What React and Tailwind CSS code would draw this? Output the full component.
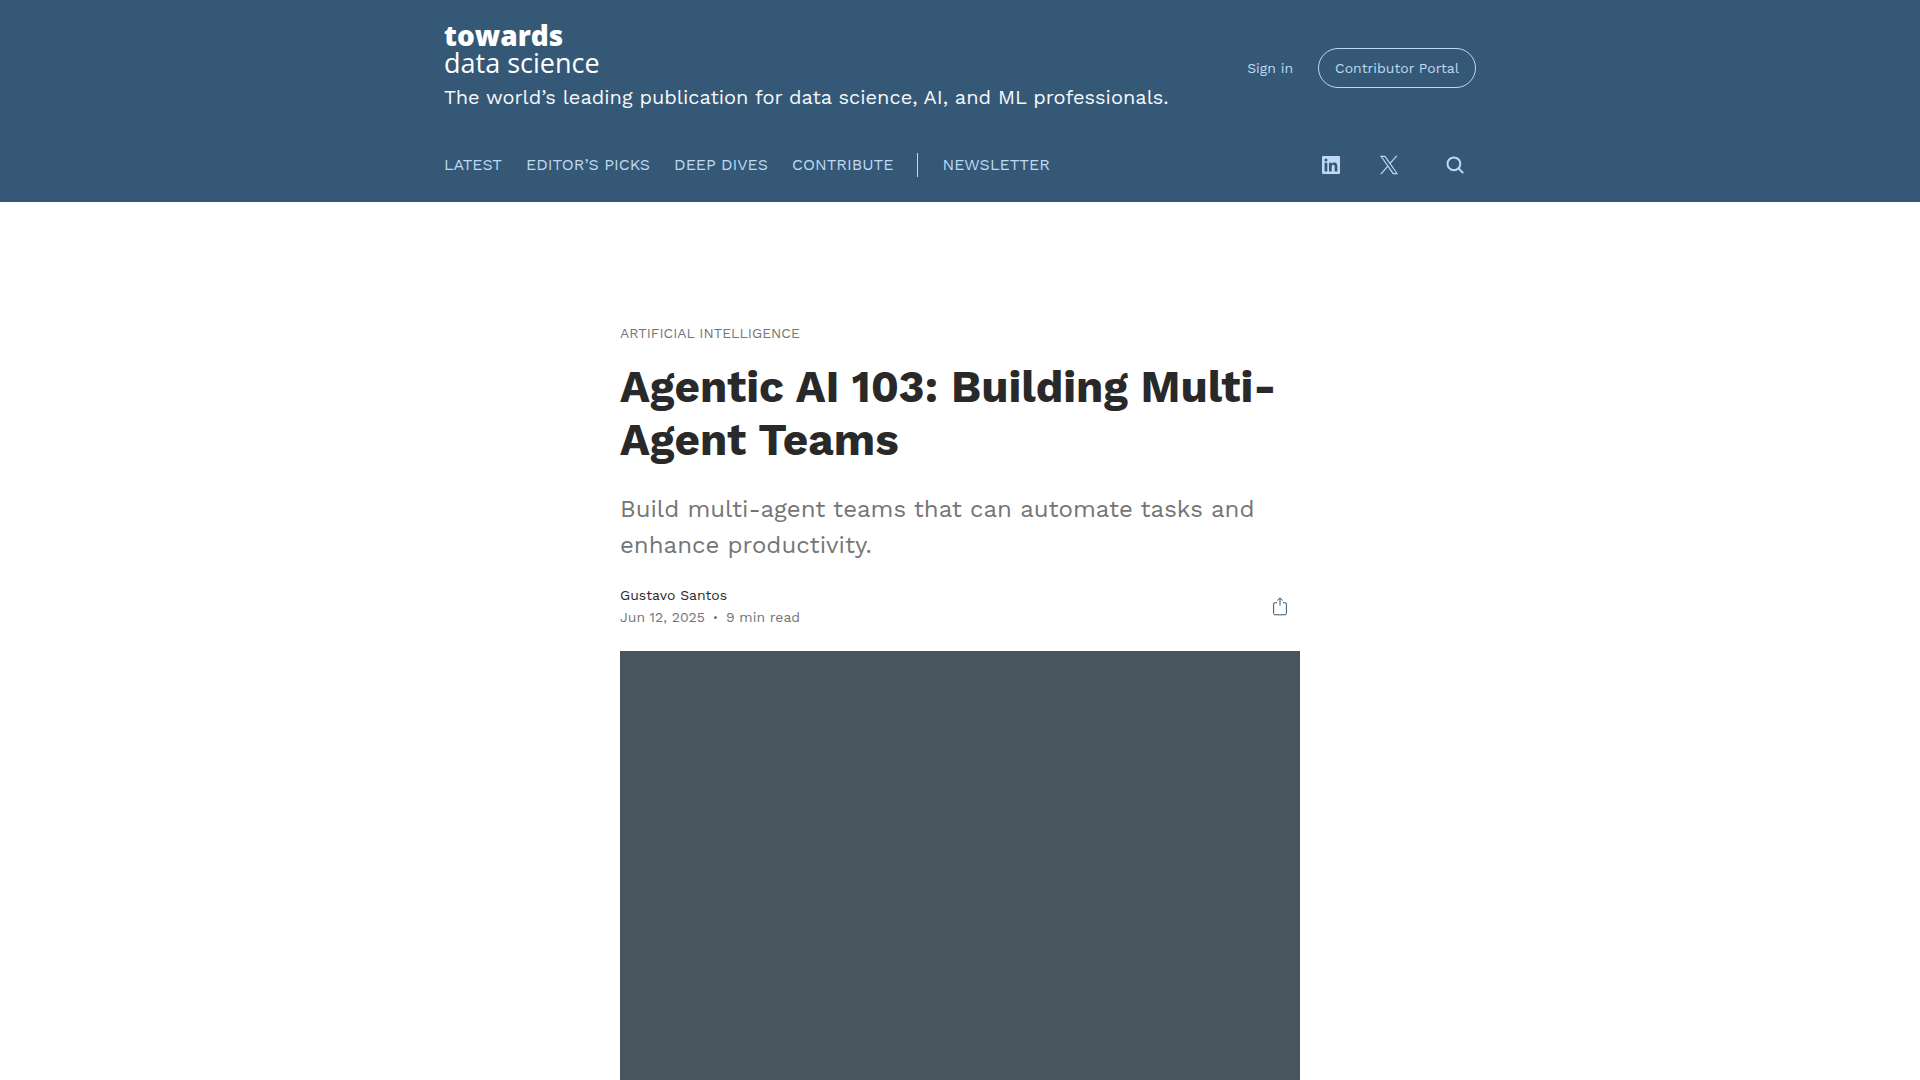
const NAV_LINKS = ["Latest", "Editor’s Picks", "Deep Dives", "Contribute"];

function LinkedInIcon() {
  return (
    <svg viewBox="0 0 18 18" className="size-[18px]" fill="currentColor" aria-hidden="true">
      <path
        fillRule="evenodd"
        d="M1 0h16a1 1 0 0 1 1 1v16a1 1 0 0 1-1 1H1a1 1 0 0 1-1-1V1a1 1 0 0 1 1-1Zm1.6 6.8v8.6h2.7V6.8H2.6Zm1.35-4.2a1.5 1.5 0 1 0 0 3 1.5 1.5 0 0 0 0-3ZM7 6.8v8.6h2.7v-4.3c0-1.2.3-2.3 1.6-2.3 1.35 0 1.35 1.3 1.35 2.3v4.3h2.7v-4.8c0-2.3-.5-4-3.2-4-1.3 0-2.1.7-2.5 1.4V6.8H7Z"
      />
    </svg>
  );
}

function XIcon() {
  return (
    <svg viewBox="0 0 24 24" className="size-[20px]" fill="currentColor" aria-hidden="true">
      <path d="M14.1 10.3 22.3 1h-1.9l-7.2 8.1L7.5 1H1.2l8.6 12.2L1.2 23h1.9l7.5-8.5 6 8.5h6.3l-8.8-12.7ZM3.8 2.4h3l13.7 19.2h-3L3.8 2.4Z" />
    </svg>
  );
}

function SearchIcon() {
  return (
    <svg viewBox="0 0 18 18" className="size-[18px]" fill="none" stroke="currentColor" strokeWidth="2" aria-hidden="true">
      <circle cx="7.9" cy="7.8" r="6.4" />
      <path d="m12.4 12.3 4.8 4.8" />
    </svg>
  );
}

function ShareIcon() {
  return (
    <svg viewBox="0 0 14 19" className="h-[19px] w-[14px]" fill="none" stroke="currentColor" aria-hidden="true">
      <path d="M4 5.7H2A1.4 1.4 0 0 0 .6 7.1v9.3A1.4 1.4 0 0 0 2 17.8h10a1.4 1.4 0 0 0 1.4-1.4V7.1A1.4 1.4 0 0 0 12 5.7h-2" />
      <path d="M7 8.6V1M4.2 3.6 7 .9l2.8 2.7" />
    </svg>
  );
}

function Header() {
  return (
    <header className="bg-[#355876] text-[#bdd9f4]">
      <div className="mx-auto max-w-[1032px] pt-[22px] pb-[15px]">
        <div className="flex items-center justify-between">
          <div>
            <a href="#home" className="block font-['Open_Sans',sans-serif] leading-[27px] text-white">
              <span className="block text-[28px] font-extrabold">towards</span>
              <span className="block text-[27px]">data science</span>
            </a>
            <p className="mt-2 text-[20px] leading-[26px] text-[#f5f8fb]">
              The world’s leading publication for data science, AI, and ML professionals.
            </p>
          </div>
          <div className="flex items-center gap-[25px] pt-1 text-sm">
            <a href="#signin">Sign in</a>
            <a href="#portal" className="rounded-full border border-[#bdd9f4] px-4 py-[9px]">
              Contributor Portal
            </a>
          </div>
        </div>
        <div className="mt-[33px] flex h-11 items-center justify-between">
          <nav className="flex items-center gap-6 text-base uppercase">
            {NAV_LINKS.map((label) => (
              <a key={label} href="#section">{label}</a>
            ))}
            <span className="h-6 w-px bg-[#bdd9f4]" />
            <a href="#newsletter">Newsletter</a>
          </nav>
          <div className="flex items-center pr-3">
            <a href="#linkedin" aria-label="LinkedIn"><LinkedInIcon /></a>
            <a href="#x" aria-label="X" className="ml-[39px]"><XIcon /></a>
            <button type="button" aria-label="Search" className="ml-[47px]"><SearchIcon /></button>
          </div>
        </div>
      </div>
    </header>
  );
}

export default function App() {
  return (
    <div className="h-screen overflow-hidden bg-white font-['Work_Sans',Inter,sans-serif]">
      <Header />
      <main className="mx-auto max-w-[680px] pt-[121px]">
        <a href="#ai" className="block text-sm leading-5 text-[#757575] uppercase">Artificial Intelligence</a>
        <h1 className="mt-[18px] text-[44px] leading-[53px] font-bold text-[#292929]">
          Agentic AI 103: Building Multi-Agent Teams
        </h1>
        <p className="mt-6 text-[24px] leading-[36px] text-[#757575]">
          Build multi-agent teams that can automate tasks and enhance productivity.
        </p>
        <div className="mt-[21px] flex items-center justify-between pr-[13px] text-sm leading-[22px] text-[#757575]">
          <div>
            <a href="#author" className="block text-[#292929]">Gustavo Santos</a>
            <div className="flex items-center gap-[9px]">
              <span>Jun 12, 2025</span>
              <span className="size-[3px] rounded-full bg-[#757575]" />
              <span>9 min read</span>
            </div>
          </div>
          <button type="button" aria-label="Share" className="text-[#355876]"><ShareIcon /></button>
        </div>
        <div className="mt-[23px] h-[453px] bg-[#49555e]" role="img" aria-label="Article cover" />
      </main>
    </div>
  );
}
